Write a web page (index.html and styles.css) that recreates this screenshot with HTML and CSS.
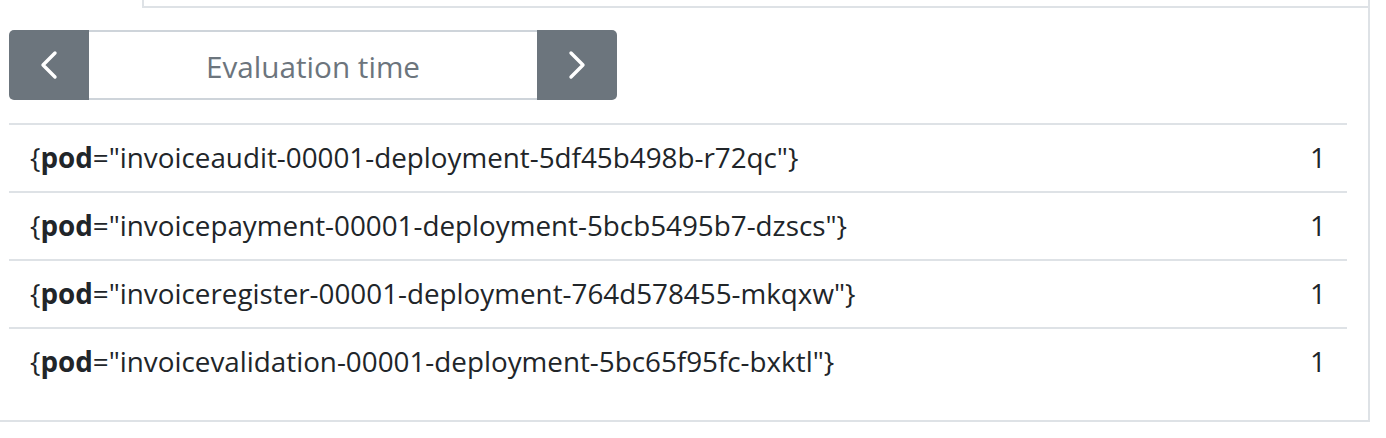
FILE: index.html
```html
<!DOCTYPE html>
<html>
<head>
<meta charset="utf-8">
<link rel="stylesheet" href="styles.css">
</head>
<body>
<div class="tabs">
  <div class="tab"></div>
  <div class="tab-rest"></div>
</div>
<div class="panel">
  <div class="time-group">
    <button class="nav-btn" type="button" aria-label="previous">
      <svg width="20" height="30" viewBox="0 0 20 30"><path d="M16 3 L4 15 L16 27" fill="none" stroke="#fff" stroke-width="3.4" stroke-linecap="round" stroke-linejoin="round"/></svg>
    </button>
    <input class="time-input" type="text" placeholder="Evaluation time">
    <button class="nav-btn right" type="button" aria-label="next">
      <svg width="20" height="30" viewBox="0 0 20 30"><path d="M4 3 L16 15 L4 27" fill="none" stroke="#fff" stroke-width="3.4" stroke-linecap="round" stroke-linejoin="round"/></svg>
    </button>
  </div>
  <table class="data">
    <tbody>
      <tr><td>{<b>pod</b>="invoiceaudit-00001-deployment-5df45b498b-r72qc"}</td><td class="val">1</td></tr>
      <tr><td>{<b>pod</b>="invoicepayment-00001-deployment-5bcb5495b7-dzscs"}</td><td class="val">1</td></tr>
      <tr><td>{<b>pod</b>="invoiceregister-00001-deployment-764d578455-mkqxw"}</td><td class="val">1</td></tr>
      <tr><td>{<b>pod</b>="invoicevalidation-00001-deployment-5bc65f95fc-bxktl"}</td><td class="val">1</td></tr>
    </tbody>
  </table>
</div>
</body>
</html>
```
FILE: styles.css
```css
html, body {
  margin: 0;
  padding: 0;
  background: #fff;
}
body {
  font-family: "Open Sans", "Noto Sans", sans-serif;
  color: #212529;
  width: 1386px;
  height: 438px;
  overflow: hidden;
}
.tabs {
  display: flex;
  width: 1370px;
  height: 8px;
}
.tab {
  box-sizing: border-box;
  width: 144px;
  border-right: 2px solid #dee2e6;
}
.tab-rest {
  flex: 1;
  border-bottom: 2px solid #dee2e6;
  border-right: 2px solid #dee2e6;
}
.panel {
  width: 1370px;
  box-sizing: border-box;
  border-right: 2px solid #dee2e6;
  border-bottom: 2px solid #dee2e6;
  padding: 22px 21px 25px 9px;
}
.time-group {
  display: flex;
  width: 608px;
  height: 70px;
}
.nav-btn {
  width: 80px;
  height: 70px;
  border: none;
  margin: 0;
  padding: 0;
  background: #6c757d;
  border-radius: 5px 0 0 5px;
  display: flex;
  align-items: center;
  justify-content: center;
}
.nav-btn.right {
  border-radius: 0 5px 5px 0;
}
.time-input {
  flex: 1;
  min-width: 0;
  height: 70px;
  box-sizing: border-box;
  margin: 0;
  padding: 3px 0 0;
  border: 2px solid #ced4da;
  border-left: none;
  border-right: none;
  text-align: center;
  font-family: inherit;
  font-size: 29.7px;
  color: #495057;
  outline: none;
}
.time-input::placeholder {
  color: #6c757d;
}
.data {
  width: 100%;
  margin-top: 23px;
  border-collapse: collapse;
  font-size: 27.8px;
}
.data td {
  border-top: 2px solid #dee2e6;
  padding: 16px 21px 18px 21px;
  line-height: 32px;
  white-space: nowrap;
}
.data b {
  font-weight: 700;
}
.data .val {
  text-align: right;
}
```
